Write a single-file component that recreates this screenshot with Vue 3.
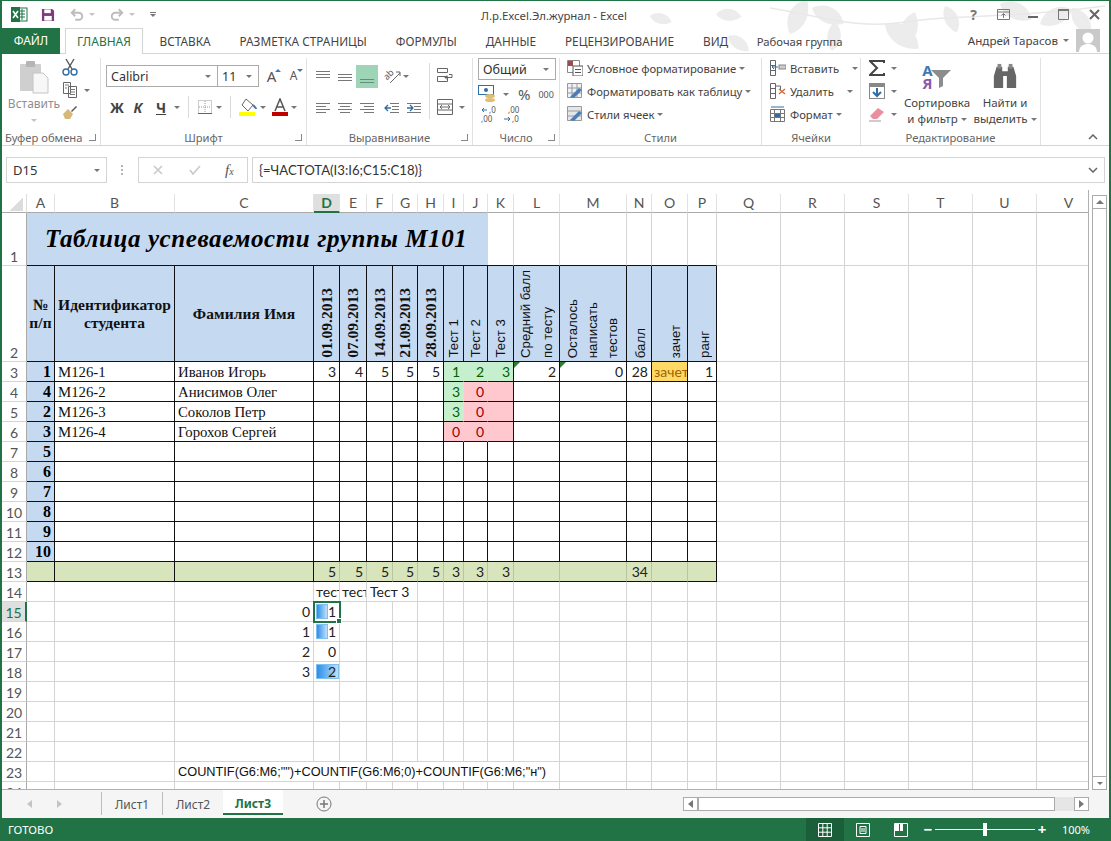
<script setup>
const letters = 'ABCDEFGHIJKLMNOPQRSTUV'.split('')
const tabs = ['ВСТАВКА', 'РАЗМЕТКА СТРАНИЦЫ', 'ФОРМУЛЫ', 'ДАННЫЕ', 'РЕЦЕНЗИРОВАНИЕ', 'ВИД']

const leaves = [
  'translate(650 16) rotate(20) scale(.7)', 'translate(716 14) rotate(10) scale(.8)', 'translate(728 36) rotate(40) scale(.8)',
  'translate(790 34) rotate(-60) scale(1.2)', 'translate(812 8) rotate(30) scale(1.1)', 'translate(835 22) rotate(100) scale(.9)',
  'translate(885 24) rotate(40) scale(1.3)', 'translate(905 46) rotate(-70) scale(1.1)', 'translate(945 6) rotate(70) scale(.9)',
  'translate(1000 4) rotate(30) scale(1.1)', 'translate(1040 24) rotate(-20) scale(1.1)', 'translate(1072 8) rotate(60) scale(1)'
]

const names = ['Иванов Игорь', 'Анисимов Олег', 'Соколов Петр', 'Горохов Сергей']
const order = [1, 4, 2, 3, 5, 6, 7, 8, 9, 10]
const dates = ['01.09.2013', '07.09.2013', '14.09.2013', '21.09.2013', '28.09.2013']
const heads = { I: 'Тест 1', J: 'Тест 2', K: 'Тест 3', L: 'Средний балл\nпо тесту', M: 'Осталось\nнаписать\nтестов', N: 'балл', O: 'зачет', P: 'ранг' }
const row3 = { D: 3, E: 4, F: 5, G: 5, H: 5, I: 1, J: 2, K: 3, L: 2, M: 0, N: 28, O: 'зачет', P: 1 }
const row13 = { D: 5, E: 5, F: 5, G: 5, H: 5, I: 3, J: 3, K: 3, N: 34 }
const tones = {
  I3: 'good', J3: 'good', K3: 'good edge', I4: 'good', J4: 'bad', K4: 'bad edge',
  I5: 'good', J5: 'bad', K5: 'bad edge', I6: 'bad', J6: 'bad', K6: 'bad edge'
}
const vals = { I4: 3, J4: 0, I5: 3, J5: 0, I6: 0, J6: 0 }
const freq = { 15: [0, 1, 12], 16: [1, 1, 12], 17: [2, 0, 0], 18: [3, 2, 23] }

function buildCells() {
  const out = []
  out.push({ id: 'corner', cls: 'corner' })
  letters.forEach(l => out.push({ id: 'h' + l, text: l, cls: l === 'D' ? 'colh active' : 'colh' }))
  for (let r = 1; r <= 24; r++) {
    out.push({ id: 'r' + r, text: r, cls: r === 15 ? 'rowh active' : 'rowh' })
    if (r === 1) {
      out.push({ id: 'title', text: 'Таблица успеваемости группы М101', cls: 'title' })
      letters.slice(10).forEach((l, i) => out.push({ id: l + 1, cls: i < 6 ? 'under' : '' }))
      continue
    }
    for (let c = 0; c < letters.length; c++) {
      const l = letters[c]
      const key = l + r
      const boxed = r <= 13 && c <= 15
      const cell = { id: key, cls: boxed ? 'box' : '' }
      if (r === 2 && c <= 15) {
        cell.cls += ' blue'
        if (l === 'A') { cell.text = '№\nп/п'; cell.cls += ' thead' }
        if (l === 'B') { cell.text = 'Идентификатор\nстудента'; cell.cls += ' thead' }
        if (l === 'C') { cell.text = 'Фамилия Имя'; cell.cls += ' thead' }
        if (c >= 3 && c <= 7) { cell.vert = dates[c - 3]; cell.cls += ' vdate' }
        if (heads[l]) { cell.vert = heads[l]; cell.cls += ' vhead v' + l }
      }
      if (r >= 3 && r <= 12) {
        if (l === 'A') { cell.text = order[r - 3]; cell.cls += ' blue num strong' }
        if (r <= 6 && l === 'B') { cell.text = 'М126-' + (r - 2); cell.cls += ' serif' }
        if (r <= 6 && l === 'C') { cell.text = names[r - 3]; cell.cls += ' serif' }
      }
      if (r === 3 && row3[l] !== undefined) {
        cell.text = row3[l]
        cell.cls += l === 'O' ? ' pass clip' : ' num'
        if (l === 'L' || l === 'M') cell.tri = true
      }
      if (tones[key]) {
        cell.cls += ' num ' + tones[key]
        if (vals[key] !== undefined) cell.text = vals[key]
      }
      if (r === 13 && c <= 15) {
        cell.cls += ' olive num'
        if (c >= 3) cell.cls += ' soft'
        if (l === 'P') cell.cls = 'box olive'
        if (row13[l]) cell.text = row13[l]
      }
      if (r === 14 && (l === 'D' || l === 'E')) { cell.text = 'тест'; cell.cls += ' clip tight' }
      if (r === 14 && l === 'F') {
        out.push({ id: key, text: 'Тест 3', cls: 'span2' })
        c++
        continue
      }
      if (freq[r] && l === 'C') { cell.text = freq[r][0]; cell.cls += ' num' }
      if (freq[r] && l === 'D') {
        cell.text = freq[r][1]
        cell.cls += ' num holder'
        cell.bar = freq[r][2]
        cell.sel = r === 15
      }
      if (r === 23 && l === 'C') {
        out.push({ id: key, text: 'COUNTIF(G6:M6;"")+COUNTIF(G6:M6;0)+COUNTIF(G6:M6;"н")', cls: 'span10' })
        c += 9
        continue
      }
      out.push(cell)
    }
  }
  return out
}
const cells = buildCells()
</script>

<template>
  <div class="app">
    <div class="head">
      <svg class="leaves" viewBox="0 0 1111 54" width="1111" height="54">
        <g v-for="(t, i) in leaves" :key="i" :transform="t">
          <path d="M0 0C8-12 24-12 32-2 22 8 8 8 0 0Z" fill="#ececec" />
        </g>
        <path d="M770 8C820 16 860 30 905 22 950 14 1000 20 1105 6" fill="none" stroke="#e8e8e8" stroke-width="1.5" />
      </svg>

      <div class="titlebar">
        <svg class="xl" viewBox="0 0 17 17" width="17" height="17">
          <rect x="6" y="2" width="10" height="13" fill="#fff" stroke="#217346" />
          <path d="M8 5h6M8 8h6M8 11h6M11 3v11" stroke="#217346" fill="none" />
          <rect x="0" y="1" width="9" height="15" fill="#217346" />
          <path d="M2 5l5 7M7 5l-5 7" stroke="#fff" stroke-width="1.6" fill="none" />
        </svg>
        <svg class="save" viewBox="0 0 15 15" width="14" height="14">
          <path d="M1 1h11l2 2v11H1z" fill="#80397b" />
          <rect x="3.500" y="1.500" width="7" height="4" fill="#fff" />
          <rect x="3.500" y="8.500" width="8" height="5" fill="#fff" />
        </svg>
        <svg class="undo" viewBox="0 0 16 14" width="14" height="13">
          <path d="M2 5h8a4 4 0 0 1 0 8H6M6 1L2 5l4 4" fill="none" stroke="#bdbdbd" stroke-width="2.2" />
        </svg>
        <i class="arr pale qa"></i>
        <svg class="redo" viewBox="0 0 16 14" width="14" height="13">
          <path d="M14 5H6a4 4 0 0 0 0 8h4M10 1l4 4-4 4" fill="none" stroke="#bdbdbd" stroke-width="2.2" />
        </svg>
        <i class="arr pale qa"></i>
        <div class="qat-more"><span></span><i class="arr"></i></div>
        <div class="doc-title">Л.р.Excel.Эл.журнал - Excel</div>
        <div class="win">
          <span class="help">?</span>
          <svg viewBox="0 0 13 11" width="13" height="11"><path d="M.5.500h12v10H.5zM.5 3h12M6.500 9V4.500M4.500 6.500l2-2 2 2" fill="none" stroke="#777" /></svg>
          <svg viewBox="0 0 10 10" width="10" height="10"><path d="M0 7h10" stroke="#666" stroke-width="2" /></svg>
          <svg viewBox="0 0 11 11" width="11" height="11"><path d="M.5 1.500h10v9H.5z" fill="none" stroke="#777" /><path d="M0 1h11" stroke="#777" stroke-width="2" /></svg>
          <svg viewBox="0 0 11 11" width="11" height="11"><path d="M1 1l9 9M10 1l-9 9" stroke="#666" stroke-width="2" /></svg>
        </div>
      </div>

      <div class="tabs">
        <div class="tab-file">ФАЙЛ</div>
        <div class="tab-home">ГЛАВНАЯ</div>
        <div v-for="t in tabs" :key="t" class="tab">{{ t }}</div>
        <div class="tab-team">Рабочая группа</div>
        <div class="user">
          <span>Андрей Тарасов</span>
          <i class="arr"></i>
          <svg viewBox="0 0 24 23" width="24" height="23">
            <rect width="24" height="23" fill="#c9c9c9" />
            <circle cx="12" cy="9" r="5.500" fill="#fff" />
            <path d="M3 23c0-6 5-8 9-8s9 2 9 8z" fill="#fff" />
          </svg>
        </div>
      </div>
    </div>

    <div class="ribbon">
      <section class="group g-clip">
        <div class="body clip-body">
          <div class="paste">
            <svg viewBox="0 0 29 34" width="29" height="34">
              <rect x="0" y="4" width="21" height="27" rx="1" fill="#cfcfcf" />
              <rect x="6" y="1" width="9" height="6" rx="1" fill="#b5b5b5" />
              <path d="M13 13h10l5 5v15H13z" fill="#f7f7f7" stroke="#c4c4c4" />
            </svg>
            <span>Вставить</span>
            <i class="arr pale"></i>
          </div>
          <div class="clip-tools">
            <svg viewBox="0 0 16 18" width="16" height="18">
              <path d="M4 1l6 10M12 1L6 11" stroke="#555" stroke-width="1.400" fill="none" />
              <circle cx="4" cy="14" r="3" fill="none" stroke="#2f6ea5" stroke-width="1.400" />
              <circle cx="12" cy="14" r="3" fill="none" stroke="#2f6ea5" stroke-width="1.400" />
            </svg>
            <div class="tool-row">
              <svg viewBox="0 0 16 16" width="16" height="16">
                <path d="M1.500.500h7v11h-7zM6.500 4.500h8v11h-8z" fill="#fff" stroke="#666" />
                <path d="M3 3h4M3 6h2M8 7.500h5M8 10h5M8 12.500h5" stroke="#777" />
              </svg>
              <i class="arr"></i>
            </div>
            <svg viewBox="0 0 16 16" width="16" height="16">
              <path d="M1 10l5-5 5 5-3 5H3z" fill="#d8b878" />
              <path d="M9 7l5-5 1 1-5 5z" fill="#555" />
            </svg>
          </div>
        </div>
        <footer class="glabel">Буфер обмена<i class="launch"></i></footer>
      </section>

      <section class="group g-font">
        <div class="body">
          <div class="combos">
            <div class="combo c-font"><span>Calibri</span><i class="arr"></i></div>
            <div class="combo c-size"><span>11</span><i class="arr"></i></div>
            <div class="grow"><b>A</b><i class="up"></i></div>
            <div class="grow small"><b>A</b><i class="down"></i></div>
          </div>
          <div class="font-row">
            <span class="fb w-b">Ж</span>
            <span class="fb w-i">К</span>
            <span class="fb w-u">Ч</span>
            <i class="arr"></i>
            <span class="vsep"></span>
            <svg viewBox="0 0 16 16" width="16" height="16">
              <path d="M1.500 1.500h13v13h-13z" fill="none" stroke="#9a9a9a" stroke-dasharray="1 1" />
              <path d="M8 2v12M2 8h12" stroke="#9a9a9a" stroke-dasharray="1 1" />
              <path d="M1 14.500h14" stroke="#666" />
            </svg>
            <i class="arr"></i>
            <span class="vsep"></span>
            <svg viewBox="0 0 18 18" width="18" height="18">
              <path d="M7 1l7 6-5 6-6-6z" fill="#fff" stroke="#666" />
              <path d="M14 7c2 2 3 3 3 4" stroke="#3d79b5" stroke-width="2" fill="none" />
              <rect x="0" y="14" width="16" height="4" fill="#ffff00" />
            </svg>
            <i class="arr"></i>
            <svg class="txt-color" viewBox="0 0 16 18" width="16" height="18">
              <path d="M3 13L8 1l5 12M5 9h6" fill="none" stroke="#555" stroke-width="1.500" />
              <rect y="14" width="16" height="4" fill="#c00000" />
            </svg>
            <i class="arr"></i>
          </div>
        </div>
        <footer class="glabel">Шрифт<i class="launch"></i></footer>
      </section>

      <section class="group g-align">
        <div class="body align-body">
          <div class="align-grid">
            <div class="al-row">
              <svg class="li" viewBox="0 0 16 16" width="16" height="16"><path d="M1 2.500h14M1 5.500h14M1 8.500h14" stroke="#777" /></svg>
              <svg class="li" viewBox="0 0 16 16" width="16" height="16"><path d="M1 5.500h14M1 8.500h14M1 11.500h14" stroke="#777" /></svg>
              <span class="al-on"><svg viewBox="0 0 16 16" width="16" height="16"><path d="M1 10.500h14M1 13.500h14" stroke="#5f8f78" /></svg></span>
              <svg class="orient" viewBox="0 0 18 16" width="18" height="16">
                <text x="1" y="9" transform="rotate(-45 5 8)" class="ab">ab</text>
                <path d="M6 14L16 4M12 3h4v4" fill="none" stroke="#666" />
              </svg>
              <i class="arr back"></i>
            </div>
            <div class="al-row second">
              <svg class="li" viewBox="0 0 16 16" width="16" height="16"><path d="M1 3.500h14M1 6.500h10M1 9.500h14M1 12.500h10" stroke="#777" /></svg>
              <svg class="li" viewBox="0 0 16 16" width="16" height="16"><path d="M1 3.500h14M3 6.500h10M1 9.500h14M3 12.500h10" stroke="#777" /></svg>
              <svg class="li" viewBox="0 0 16 16" width="16" height="16"><path d="M1 3.500h14M5 6.500h10M1 9.500h14M5 12.500h10" stroke="#777" /></svg>
              <svg class="li ind" viewBox="0 0 16 16" width="16" height="16"><path d="M6 3.500h9M8 6.500h7M8 9.500h7M6 12.500h9" stroke="#777" /><path d="M1 8h6M4 5L1 8l3 3" stroke="#2f6ea5" stroke-width="1.300" fill="none" /></svg>
              <svg class="li" viewBox="0 0 16 16" width="16" height="16"><path d="M1 3.500h14M8 6.500h7M8 9.500h7M1 12.500h14" stroke="#777" /><path d="M1 8h6M4 5l3 3-3 3" stroke="#2f6ea5" stroke-width="1.300" fill="none" /></svg>
            </div>
          </div>
          <span class="vsep tall"></span>
          <div class="wrap-col">
            <svg viewBox="0 0 16 16" width="16" height="16"><path d="M.500 1.500h10v4H.5zM.5 9.500h10v5H.5zM12 7.500h3v3H8M10 8.500l-2 2 2 2" fill="none" stroke="#666" /></svg>
            <div class="tool-row">
              <svg viewBox="0 0 16 16" width="16" height="16"><path d="M.5.500h15v15H.5zM.5 5h15M.5 11h15M3 8h10M5 6l-2 2 2 2M11 6l2 2-2 2" fill="none" stroke="#666" /></svg>
              <i class="arr"></i>
            </div>
          </div>
        </div>
        <footer class="glabel">Выравнивание<i class="launch"></i></footer>
      </section>

      <section class="group g-num">
        <div class="body num-body">
          <div class="combo c-gen"><span>Общий</span><i class="arr"></i></div>
          <div class="num-row">
            <svg viewBox="0 0 20 18" width="20" height="18">
              <rect x=".5" y=".5" width="15" height="9" fill="#fff" stroke="#2f6ea5" />
              <circle cx="8" cy="5" r="2" fill="#2f6ea5" />
              <ellipse cx="12" cy="11" rx="5" ry="2" fill="#e0bf75" />
              <ellipse cx="12" cy="15" rx="5" ry="2" fill="#e0bf75" />
            </svg>
            <i class="arr"></i>
            <span class="pct">%</span>
            <span class="thou">000</span>
          </div>
          <div class="num-row third">
            <svg viewBox="0 0 18 18" width="18" height="18"><path d="M1 4h5M3 2L1 4l2 2" stroke="#2f6ea5" fill="none" /><text x="8" y="7" class="dec">,0</text><text x="0" y="16" class="dec">,00</text></svg>
            <svg viewBox="0 0 18 18" width="18" height="18"><text x="5" y="7" class="dec">,00</text><path d="M1 13h6M5 11l2 2-2 2" stroke="#2f6ea5" fill="none" /><text x="9" y="16" class="dec">,0</text></svg>
          </div>
        </div>
        <footer class="glabel">Число<i class="launch"></i></footer>
      </section>

      <section class="group g-style">
        <div class="body list-body">
          <div class="li-row">
            <svg viewBox="0 0 16 16" width="16" height="16"><path d="M.5.500h12v12H.5z" fill="#fff" stroke="#888" /><rect x="1" y="1" width="5" height="5" fill="#a04a4a" /><rect x="6" y="6" width="10" height="10" fill="#fff" stroke="#555" /><path d="M8 9.500h6M8 12.500h6" stroke="#555" /></svg>
            <span>Условное форматирование</span><i class="arr"></i>
          </div>
          <div class="li-row">
            <svg viewBox="0 0 16 16" width="16" height="16"><path d="M.5.500h14v14H.5zM.5 5h14M.5 10h14M5 .5v14M10 .5v14" fill="#eef2f7" stroke="#999" /><path d="M3 14l9-9 3 2-8 8z" fill="#4a7fb5" /></svg>
            <span>Форматировать как таблицу</span><i class="arr"></i>
          </div>
          <div class="li-row">
            <svg viewBox="0 0 16 16" width="16" height="16"><path d="M.5.500h14v14H.5zM.5 5h14M.5 10h14" fill="#e3e7ec" stroke="#999" /><path d="M3 14l9-9 3 2-8 8z" fill="#4a7fb5" /></svg>
            <span>Стили ячеек</span><i class="arr"></i>
          </div>
        </div>
        <footer class="glabel">Стили</footer>
      </section>

      <section class="group g-cells">
        <div class="body list-body">
          <div class="li-row">
            <svg viewBox="0 0 17 16" width="17" height="16"><path d="M1.500.500h5v15h-5zM1.500 5.500h5M1.500 10.500h5" fill="none" stroke="#666" /><rect x="10" y="5" width="7" height="4" fill="#ccc" stroke="#888" /><path d="M9 7H3M5 5L3 7l2 2" stroke="#2f6ea5" fill="none" /></svg>
            <span>Вставить</span><i class="arr far"></i>
          </div>
          <div class="li-row">
            <svg viewBox="0 0 17 16" width="17" height="16"><path d="M1.500.500h5v15h-5zM1.500 5.500h5M1.500 10.500h5M6.500 3h5v5" fill="none" stroke="#666" /><path d="M10 6l6 5M16 6l-6 5" stroke="#d2693c" stroke-width="1.400" /></svg>
            <span>Удалить</span><i class="arr far"></i>
          </div>
          <div class="li-row">
            <svg viewBox="0 0 17 16" width="17" height="16"><path d="M1.500 3.500h14v12h-14zM1.500 7.500h14M1.500 11.500h14M5.500 3.500v12M11.500 3.500v12" fill="#fff" stroke="#777" /><rect x="6" y="8" width="5" height="3" fill="#2f6ea5" /><path d="M2 1h13" stroke="#2f6ea5" /></svg>
            <span>Формат</span><i class="arr"></i>
          </div>
        </div>
        <footer class="glabel">Ячейки</footer>
      </section>

      <section class="group g-edit">
        <div class="body edit-body">
          <div class="edit-tools">
            <div class="tool-row">
              <svg viewBox="0 0 16 16" width="16" height="16"><path d="M15 3V1H1l7 7-7 7h14v-2" fill="none" stroke="#444" stroke-width="2" /></svg>
              <i class="arr"></i>
            </div>
            <div class="tool-row">
              <svg viewBox="0 0 16 16" width="16" height="16"><rect x=".5" y=".5" width="15" height="15" fill="#fff" stroke="#888" /><rect x="1" y="1" width="14" height="3" fill="#888" /><path d="M8 5v8M4 9l4 4 4-4" stroke="#2f6ea5" stroke-width="2" fill="none" /></svg>
              <i class="arr"></i>
            </div>
            <div class="tool-row">
              <svg viewBox="0 0 16 16" width="16" height="16"><path d="M1 10l8-8 6 4-7 7H4z" fill="#ea8fa0" /><path d="M0 15h12" stroke="#999" /></svg>
              <i class="arr"></i>
            </div>
          </div>
          <div class="big-btn b-sort">
            <div class="sort-ic">
              <div class="az"><span class="az-a">А</span><span class="az-z">Я</span></div>
              <svg viewBox="0 0 22 22" width="22" height="22"><path d="M1 4h20l-8 8v8l-4 2V12z" fill="#8c8c8c" /></svg>
            </div>
            <span>Сортировка</span>
            <span>и фильтр<i class="arr inl"></i></span>
          </div>
          <div class="big-btn b-find">
            <svg viewBox="0 0 28 28" width="26" height="26">
              <path d="M2 14l3-10h6v5h6V4h6l3 10v13h-10V14h-4v13H2z" fill="#666" />
              <rect x="6" y="1" width="4" height="5" fill="#888" /><rect x="18" y="1" width="4" height="5" fill="#888" />
            </svg>
            <span>Найти и</span>
            <span>выделить<i class="arr inl"></i></span>
          </div>
        </div>
        <footer class="glabel">Редактирование</footer>
      </section>

      <div class="collapse">
        <svg viewBox="0 0 10 6" width="10" height="6"><path d="M1 5l4-4 4 4" fill="none" stroke="#666" stroke-width="1.500" /></svg>
      </div>
    </div>

    <div class="formula">
      <div class="namebox"><span>D15</span><i class="arr"></i></div>
      <div class="dots"></div>
      <div class="fx">
        <svg viewBox="0 0 10 10" width="10" height="10"><path d="M1 1l8 8M9 1L1 9" stroke="#c9c9c9" stroke-width="1.600" /></svg>
        <svg viewBox="0 0 12 10" width="12" height="10"><path d="M1 5l3 4 7-8" fill="none" stroke="#c9c9c9" stroke-width="1.600" /></svg>
        <span class="fx-t">f<small>x</small></span>
      </div>
      <div class="input">
        <span>{=ЧАСТОТА(I3:I6;C15:C18)}</span>
        <svg viewBox="0 0 10 6" width="10" height="6"><path d="M1 1l4 4 4-4" fill="none" stroke="#666" stroke-width="1.500" /></svg>
      </div>
    </div>

    <div class="sheet-wrap">
      <div class="sheet">
        <div class="grid">
          <div v-for="c in cells" :key="c.id" class="cell" :class="c.cls">
            <span v-if="c.bar" class="bar" :style="{ width: c.bar + 'px' }"></span>
            <span v-if="c.tri" class="tri"></span>
            <span v-if="c.vert" class="vt">{{ c.vert }}</span>
            <span v-else class="t">{{ c.text }}</span>
            <span v-if="c.sel" class="selbox"><i></i></span>
          </div>
        </div>
      </div>
      <div class="vscroll">
        <div class="sb-btn"><i class="arr flip"></i></div>
        <div class="sb-thumb"></div>
        <div class="sb-btn"><i class="arr"></i></div>
      </div>
    </div>

    <div class="sheetbar">
      <div class="nav"><i class="tri-l"></i><i class="tri-r"></i></div>
      <div class="stab">Лист1</div>
      <div class="stab">Лист2</div>
      <div class="stab on">Лист3</div>
      <div class="plus">
        <svg viewBox="0 0 16 16" width="16" height="16"><circle cx="8" cy="8" r="7" fill="none" stroke="#777" /><path d="M8 4v8M4 8h8" stroke="#777" stroke-width="1.500" /></svg>
      </div>
      <div class="hdots"></div>
      <div class="hscroll">
        <div class="sb-btn"><i class="tri-l dark"></i></div>
        <div class="h-thumb"></div>
        <div class="h-track"></div>
        <div class="sb-btn"><i class="tri-r dark"></i></div>
      </div>
    </div>

    <div class="status">
      <span class="ready">ГОТОВО</span>
      <div class="views">
        <span class="view on">
          <svg viewBox="0 0 14 14" width="14" height="14"><path d="M.5.500h13v13H.5zM.5 4.800h13M.5 9.200h13M4.800.5v13M9.200.5v13" fill="none" stroke="#fff" /></svg>
        </span>
        <span class="view">
          <svg viewBox="0 0 14 14" width="14" height="14"><path d="M.5.500h13v13H.5zM4 3.500h6v7H4zM5 6h4M5 8h4" fill="none" stroke="#fff" /></svg>
        </span>
        <span class="view">
          <svg viewBox="0 0 14 14" width="14" height="14"><path d="M.5.500h13v13H.5z" fill="none" stroke="#fff" /><path d="M1 1h4v7H1zM6 1h3v7H6z" fill="#fff" /></svg>
        </span>
      </div>
      <div class="zoom">
        <span class="zm">−</span>
        <div class="slider"><i></i></div>
        <span class="zp">+</span>
      </div>
      <span class="pct100">100%</span>
    </div>
  </div>
</template>

<style>
html, body { margin: 0; padding: 0; background: #fff; }
</style>

<style scoped>
.app {
  width: 1111px;
  height: 841px;
  box-sizing: border-box;
  border-left: 2px solid #217346;
  border-right: 2px solid #217346;
  border-top: 1px solid #217346;
  display: flex;
  flex-direction: column;
  overflow: hidden;
  background: #fff;
  font-family: "Noto Sans", "Open Sans", sans-serif;
  font-size: 12px;
  color: #444;
}

i { display: block; font-style: normal; }
.arr {
  display: inline-block;
  width: 0;
  height: 0;
  border-left: 3px solid transparent;
  border-right: 3px solid transparent;
  border-top: 3px solid #777;
  flex: none;
}
.arr.pale { border-top-color: #c4c4c4; }
.arr.flip { border-top: 0; border-bottom: 4px solid #777; border-left-width: 4px; border-right-width: 4px; }

/* header */
.head { position: relative; height: 53px; flex: none; }
.leaves { position: absolute; left: -2px; top: -1px; }
.titlebar { position: relative; height: 27px; display: flex; align-items: center; }
.xl { margin-left: 9px; }
.save { margin-left: 13px; }
.undo { margin-left: 15px; }
.redo { margin-left: 15px; }
.qa { margin-left: 5px; }
.qat-more { margin-left: 14px; width: 8px; display: flex; flex-direction: column; align-items: center; gap: 1px; }
.qat-more span { width: 6px; height: 1px; background: #777; }
.doc-title { position: absolute; left: 479px; top: 7px; font-size: 11.400px; line-height: 16px; color: #444; white-space: nowrap; }
.win { margin-left: auto; display: flex; align-items: center; gap: 18px; padding-right: 9px; }
.win svg:nth-child(2) { margin-left: 2px; }
.win svg:nth-child(4) { margin-left: 2px; }
.win svg:nth-child(5) { margin-left: 2px; }
.help { font-weight: 700; font-size: 14px; color: #777; line-height: 14px; }

.tabs { position: relative; height: 26px; display: flex; align-items: stretch; border-bottom: 1px solid #d4d4d4; box-sizing: border-box; }
.tab-file {
  width: 58px;
  background: #217346;
  color: #fff;
  text-align: center;
  line-height: 26px;
  font-size: 12px;
  margin-bottom: -1px;
}
.tab-home {
  width: 78px;
  margin-left: 5px;
  box-sizing: border-box;
  background: #fff;
  border: 1px solid #d4d4d4;
  border-bottom: 0;
  margin-bottom: -1px;
  color: #217346;
  text-align: center;
  line-height: 26px;
}
.tab { padding: 0 14.500px; line-height: 27px; white-space: nowrap; font-size: 11.800px; }
.tab-home + .tab { margin-left: 2px; }
.tab-team { margin-left: 14px; line-height: 27px; font-size: 11.300px; white-space: nowrap; }
.user { margin-left: auto; display: flex; align-items: center; padding-right: 9px; font-size: 11.600px; }
.user .arr { margin: 0 7px 0 5px; }

/* ribbon */
.ribbon {
  height: 92px;
  flex: none;
  display: flex;
  box-sizing: border-box;
  border-bottom: 1px solid #d4d4d4;
  position: relative;
}
.group {
  display: flex;
  flex-direction: column;
  box-sizing: border-box;
  margin-top: 4px;
  border-right: 1px solid #e1e1e1;
  flex: none;
}
.g-clip { width: 99px; }
.g-font { width: 206px; }
.g-align { width: 166px; }
.g-num { width: 87px; }
.g-style { width: 202px; }
.g-cells { width: 99px; }
.g-edit { width: 180px; }
.body { flex: 1; min-height: 0; }
.glabel {
  height: 15px;
  line-height: 15px;
  text-align: center;
  font-size: 11.200px;
  color: #666;
  position: relative;
  white-space: nowrap;
}
.launch {
  position: absolute;
  right: 4px;
  top: 4px;
  width: 6px;
  height: 6px;
  border-left: 1px solid #888;
  border-bottom: 1px solid #888;
  transform: scaleX(-1);
}
.g-clip .glabel { text-align: left; padding-left: 3px; }
.vsep { width: 1px; height: 22px; background: #dadada; flex: none; }

.clip-body { display: flex; }
.paste { width: 56px; margin-left: 4px; display: flex; flex-direction: column; align-items: center; padding-top: 2px; }
.paste span { color: #8f8f8f; font-size: 12px; line-height: 16px; margin-top: 2px; }
.paste .arr { margin-top: 7px; }
.clip-tools { display: flex; flex-direction: column; gap: 6px; padding-top: 0; }
.tool-row { display: flex; align-items: center; gap: 6px; }

.combos { display: flex; align-items: center; padding: 7px 0 0 5px; }
.combo {
  box-sizing: border-box;
  height: 22px;
  border: 1px solid #ababab;
  background: #fff;
  display: flex;
  align-items: center;
  justify-content: space-between;
  padding: 0 6px 0 4px;
  color: #333;
  font-size: 12.500px;
  flex: none;
}
.c-font { width: 112px; }
.c-size { width: 42px; margin-left: -1px; }
.grow { position: relative; width: 21px; font-size: 15px; text-align: center; color: #555; margin-left: 2px; line-height: 18px; }
.grow b { font-weight: 400; }
.grow.small { font-size: 12px; margin-left: 1px; }
.up, .down { position: absolute; right: 1px; top: 2px; width: 0; height: 0; border-left: 3px solid transparent; border-right: 3px solid transparent; }
.up { border-bottom: 3px solid #3d79b5; }
.down { border-top: 3px solid #3d79b5; }

.font-row { display: flex; align-items: center; padding: 8px 0 0 5px; height: 24px; }
.fb { text-align: center; font-weight: 700; font-size: 14px; color: #444; flex: none; }
.w-b { width: 22px; }
.w-i { width: 20px; font-style: italic; }
.w-u { width: 26px; text-decoration: underline; }
.font-row .arr { margin: 0 8px 0 0; }
.font-row .vsep { margin-right: 8px; }
.font-row svg { margin-right: 3px; flex: none; }
.font-row .txt-color { margin-left: -2px; }

.align-body { display: flex; align-items: flex-start; padding-top: 7px; padding-left: 8px; }
.align-grid { width: 114px; flex: none; }
.al-row { display: flex; align-items: center; height: 23px; gap: 6px; }
.al-row.second { margin-top: 8px; }
.al-on { width: 22px; height: 23px; background: #9fd5b7; display: flex; align-items: center; justify-content: center; margin-left: -3px; flex: none; }
.li { flex: none; }
.orient { flex: none; overflow: visible; }
.ab { font-size: 9px; fill: #555; font-family: "Noto Sans", sans-serif; }
.arr.back { margin-left: -5px; }
.ind { margin-left: 3px; }
.tall { height: 56px; margin-top: -2px; }
.wrap-col { margin-left: 7px; display: flex; flex-direction: column; gap: 16px; padding-top: 2px; }

.num-body { padding: 0 0 0 5px; }
.c-gen { width: 78px; }
.num-row { display: flex; align-items: center; gap: 5px; margin-top: 5px; height: 18px; }
.pct { font-size: 15px; margin-left: 4px; color: #555; }
.thou { font-size: 9px; margin-left: 3px; color: #555; }
.third { margin-top: 3px; gap: 4px; padding-left: 3px; }
.third svg { overflow: visible; }
.dec { font-size: 8px; fill: #555; font-family: "Noto Sans", sans-serif; }

.list-body { display: flex; flex-direction: column; padding: 2px 0 0 7px; gap: 7px; }
.li-row { display: flex; align-items: center; height: 16px; white-space: nowrap; font-size: 11.250px; }
.li-row span { margin-left: 4px; margin-right: 3px; }
.arr.far { margin-left: 10px; }

.edit-body { display: flex; }
.edit-tools { width: 42px; padding-left: 8px; box-sizing: border-box; display: flex; flex-direction: column; gap: 7px; padding-top: 2px; }
.big-btn { display: flex; flex-direction: column; align-items: center; white-space: nowrap; font-size: 11.500px; line-height: 16px; color: #444; }
.b-sort { width: 68px; }
.b-find { width: 68px; padding-top: 5px; }
.b-find svg { margin-bottom: 6px; }
.sort-ic { display: flex; align-items: flex-start; height: 31px; box-sizing: border-box; padding-top: 6px; margin-bottom: 6px; }
.sort-ic svg { margin-left: -3px; margin-top: 2px; }
.az { display: flex; flex-direction: column; line-height: 13px; font-weight: 700; font-size: 15px; }
.az-a { color: #3d79b5; }
.az-z { color: #8a5aa8; }
.arr.inl { margin-left: 3px; vertical-align: middle; }
.collapse { flex: 1; display: flex; align-items: flex-end; justify-content: center; padding-bottom: 5px; margin-left: 36px; }

/* formula bar */
.formula { height: 44px; flex: none; display: flex; align-items: center; box-sizing: border-box; padding: 4px 4px 0 4px; }
.namebox {
  width: 101px;
  height: 26px;
  box-sizing: border-box;
  border: 1px solid #d4d4d4;
  display: flex;
  align-items: center;
  justify-content: space-between;
  padding: 0 6px;
  font-size: 13px;
  color: #333;
  flex: none;
}
.dots { width: 2px; height: 10px; margin-left: 14px; margin-right: 15px; border-left: 2px dotted #b5b5b5; box-sizing: border-box; flex: none; }
.fx {
  width: 110px;
  height: 26px;
  box-sizing: border-box;
  border: 1px solid #d4d4d4;
  display: flex;
  align-items: center;
  padding-left: 14px;
  gap: 26px;
  flex: none;
}
.fx-t { font-family: "Liberation Serif", serif; font-style: italic; font-size: 15px; color: #555; margin-left: -2px; }
.fx-t small { font-size: 10px; }
.input {
  margin-left: 4px;
  flex: 1;
  height: 26px;
  box-sizing: border-box;
  border: 1px solid #d4d4d4;
  display: flex;
  align-items: center;
  justify-content: space-between;
  padding: 0 6px;
  font-family: Lato, "Open Sans", sans-serif;
  font-size: 13.200px;
  color: #333;
}

/* sheet */
.sheet-wrap { height: 600px; flex: none; display: flex; }
.sheet { width: 1087px; flex: none; overflow: hidden; box-sizing: border-box; border-right: 1px solid #b0b0b0; border-bottom: 1px solid #b0b0b0; padding-top: 4px; }
.grid {
  display: grid;
  grid-template-columns: 25px 28px 120px 139px 26px 27px 26px 25px 26px 20px 24px 26px 46px 67px 25px 36px 29px 64px 64px 64px 64px 64px 64px;
  grid-template-rows: 19px 53px 96px;
  grid-auto-rows: 20px;
  width: 1200px;
  font-family: Lato, "Open Sans", sans-serif;
  font-size: 14px;
  color: #222;
}
.cell {
  box-sizing: border-box;
  border-right: 1px solid #d4d4d4;
  border-bottom: 1px solid #d4d4d4;
  line-height: 20px;
  padding: 0 3px;
  white-space: nowrap;
  position: relative;
  min-width: 0;
}
.t { white-space: pre-line; position: relative; }
.corner { border-bottom: 1px solid #aaa; border-right: 1px solid #ddd; background: linear-gradient(135deg, transparent 50%, #dcdcdc 50%) no-repeat 8px 4px / 13px 13px; }
.colh { text-align: center; border-bottom: 1px solid #aaa; border-right: 1px solid #e2e2e2; color: #555; font-size: 14px; padding: 0; line-height: 18px; }
.colh.active { background: #dfdfdf; color: #217346; font-weight: 700; border-bottom: 2px solid #217346; }
.rowh { text-align: center; color: #555; font-size: 14px; border-right: 1px solid #aaa; padding: 0; display: flex; align-items: flex-end; justify-content: center; line-height: 17px; }
.rowh.active { background: #dfdfdf; color: #217346; border-right: 2px solid #217346; }
.title {
  grid-column: span 10;
  background: #c5d9f1;
  border-right: 0;
  border-bottom: 1px solid #111;
  font-family: "Liberation Serif", serif;
  font-weight: 700;
  font-style: italic;
  font-size: 25px;
  line-height: 52px;
  color: #000;
  padding-left: 18px;
  letter-spacing: .6px;
}
.under { border-bottom: 1px solid #111; }
.box { border-right: 1px solid #111; border-bottom: 1px solid #111; }
.blue { background: #c5d9f1; }
.num { text-align: right; }
.strong { font-family: "Liberation Serif", serif; font-weight: 700; font-size: 16px; color: #000; }
.serif { font-family: "Liberation Serif", serif; font-size: 14.800px; color: #111; }
.thead {
  font-family: "Liberation Serif", serif;
  font-weight: 700;
  font-size: 15.500px;
  line-height: 18px;
  color: #111;
  text-align: center;
  display: flex;
  align-items: center;
  justify-content: center;
  padding: 0;
  letter-spacing: .1px;
}
.vdate, .vhead { display: flex; justify-content: center; align-items: flex-end; padding: 0 0 3px; }
.vt { writing-mode: vertical-rl; transform: rotate(180deg); white-space: pre; }
.vdate .vt { font-family: "Liberation Serif", serif; font-weight: 700; font-size: 15.500px; line-height: 20px; color: #111; }
.vhead .vt { font-family: "Liberation Sans", sans-serif; font-size: 13.300px; line-height: 20px; color: #111; }
.vL .vt { line-height: 22px; }
.vN { padding-left: 3px; }
.vO { padding-left: 12px; }
.vP { padding-left: 6px; }
.good { background: #c6efce; color: #006100; border-right-color: transparent; }
.bad { background: #ffc7ce; color: #9c0006; border-right-color: transparent; }
.edge { border-right-color: #111; }
.pass { background: #ffd966; color: #9c6500; padding: 0 0 0 2px; }
.clip { overflow: hidden; }
.tight { padding: 0 0 0 2px; }
.olive { background: #d8e4bc; }
.soft { border-right-color: #b9c5a0; }
.tri { position: absolute; left: 0; top: 0; width: 0; height: 0; border-top: 6px solid #2e7d32; border-right: 6px solid transparent; }
.span2 { grid-column: span 2; }
.span10 { grid-column: span 10; font-family: "Liberation Sans", sans-serif; font-size: 12.750px; color: #111; }
.holder { overflow: visible; }
.bar {
  position: absolute;
  left: 2px;
  top: 2px;
  bottom: 2px;
  box-sizing: border-box;
  border: 1px solid #7cc0f2;
  background: linear-gradient(90deg, #2b8fea, #c0e0fb);
}
.selbox {
  position: absolute;
  left: -1px;
  top: -1px;
  right: -2px;
  bottom: -2px;
  border: 2px solid #217346;
  z-index: 2;
}
.selbox i { position: absolute; right: -3px; bottom: -3px; width: 4px; height: 4px; background: #217346; border: 1px solid #fff; box-sizing: content-box; }

/* scrollbars */
.vscroll { width: 17px; margin-left: 3px; padding-top: 5px; display: flex; flex-direction: column; box-sizing: border-box; }
.sb-btn { flex: none; width: 15px; height: 14px; box-sizing: border-box; border: 1px solid #ababab; background: #fff; display: flex; align-items: center; justify-content: center; }
.sb-thumb { flex: 1; width: 15px; box-sizing: border-box; border: 1px solid #ababab; border-top: 0; border-bottom: 0; background: #fff; }
.sheetbar { height: 28px; flex: none; display: flex; align-items: stretch; background: #f5f5f5; }
.nav { width: 99px; box-sizing: border-box; display: flex; align-items: center; padding-left: 25px; gap: 25px; }
.tri-l, .tri-r { width: 0; height: 0; border-top: 4px solid transparent; border-bottom: 4px solid transparent; }
.tri-l { border-right: 5px solid #c4c4c4; }
.tri-r { border-left: 5px solid #c4c4c4; }
.tri-l.dark { border-right-color: #777; }
.tri-r.dark { border-left-color: #777; }
.stab { width: 60px; text-align: center; line-height: 26px; height: 23px; margin-top: 2px; border-left: 1px solid #bbb; font-size: 12px; color: #555; }
.stab.on { background: #fff; color: #217346; font-weight: 700; border-left: 0; border-bottom: 2px solid #217346; box-sizing: content-box; height: 23px; margin-top: 0; padding-top: 0; line-height: 27px; }
.plus { width: 82px; display: flex; align-items: center; justify-content: center; }
.hdots { width: 8px; margin-left: 310px; flex: none; }
.hscroll { display: flex; align-items: center; width: 406px; flex: none; }
.h-thumb { flex: 1; height: 14px; box-sizing: border-box; border: 1px solid #ababab; background: #fff; }
.h-track { width: 19px; height: 14px; background: #e6e6e6; }

.status { height: 23px; flex: none; background: #217346; color: #fff; display: flex; align-items: center; margin: 0 -2px; font-size: 11.500px; }
.ready { margin-left: 8px; }
.views { margin-left: auto; display: flex; align-self: stretch; }
.view { width: 38px; display: flex; align-items: center; justify-content: center; }
.view.on { background: #1a5f39; }
.zoom { display: flex; align-items: center; margin-left: 3px; gap: 2px; }
.zm, .zp { font-weight: 700; font-size: 15px; line-height: 15px; width: 10px; text-align: center; }
.slider { width: 100px; height: 1px; background: #fff; position: relative; }
.slider i { position: absolute; left: 48px; top: -6px; width: 4px; height: 13px; background: #fff; }
.pct100 { margin-left: 15px; margin-right: 21px; font-size: 11px; }
</style>
